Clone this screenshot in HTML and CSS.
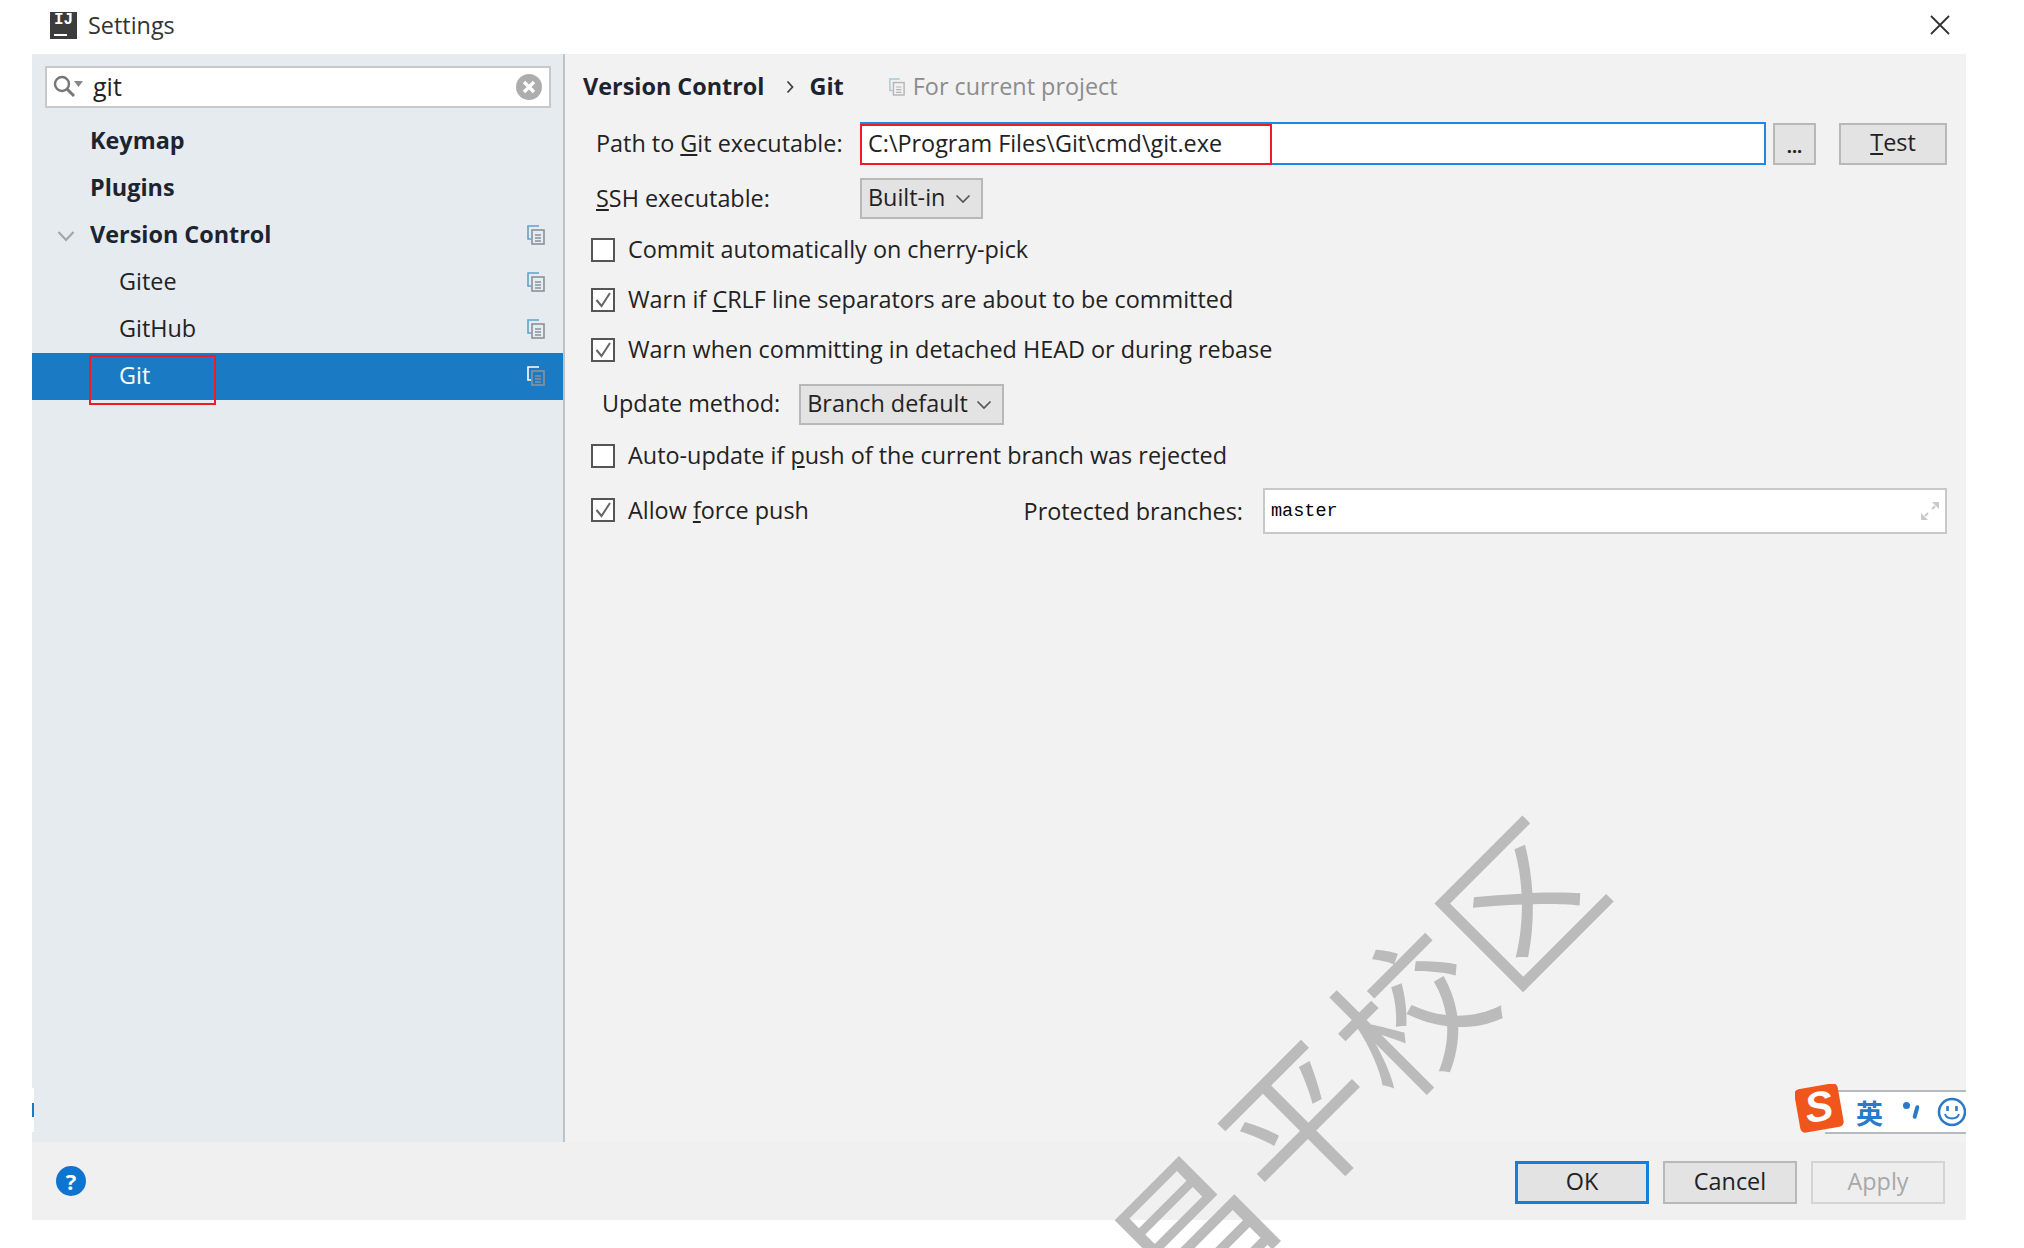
FILE: index.html
```html
<!DOCTYPE html>
<html lang="en">
<head>
  <meta charset="UTF-8">
  <meta name="viewport" content="width=device-width, initial-scale=1.0">
  <title>Settings</title>
  <link rel="stylesheet" href="styles.css">
</head>
<body>

  <svg class="icon-defs" width="0" height="0">
    <symbol id="copy" viewBox="0 0 18 20">
      <path d="M12 1H1v13h3" fill="none" stroke="currentColor" stroke-width="1.6"/>
      <rect x="5" y="5" width="12" height="14" fill="none" stroke="var(--copy-front)" stroke-width="1.6"/>
      <path d="M8 10h6M8 13h6M8 16h6" stroke="var(--copy-front)" stroke-width="1.4"/>
    </symbol>
  </svg>

  <div class="titlebar">
    <div class="app-logo"><span>IJ</span><i></i></div>
    <div class="title-text">Settings</div>
    <svg class="close-icon" width="22" height="22" viewBox="0 0 22 22">
      <path d="M2 2l18 18M20 2L2 20" stroke="#333" stroke-width="1.8" fill="none"/>
    </svg>
  </div>

  <div class="dialog">
    <div class="main">
      <div class="sidebar">
        <div class="search-box">
          <svg class="search-icon" width="32" height="24" viewBox="0 0 32 24">
            <circle cx="9" cy="9" r="7" fill="none" stroke="#777" stroke-width="2.4"/>
            <path d="M14 14l7 7" stroke="#777" stroke-width="3"/>
            <path d="M21 6h9l-4.500 6z" fill="#888"/>
          </svg>
          <span class="search-text">git</span>
          <svg class="clear-icon" width="26" height="26" viewBox="0 0 26 26">
            <circle cx="13" cy="13" r="13" fill="#adadad"/>
            <path d="M8 8l10 10M18 8L8 18" stroke="#fff" stroke-width="3.400"/>
          </svg>
        </div>

        <div class="tree">
          <div class="tree-row"><span class="tree-label bold">Keymap</span></div>
          <div class="tree-row"><span class="tree-label bold">Plugins</span></div>
          <div class="tree-row">
            <svg class="tree-arrow" width="18" height="12" viewBox="0 0 18 12"><path d="M1.500 2l7.500 8 7.500-8" fill="none" stroke="#a2a6aa" stroke-width="2.200"/></svg>
            <span class="tree-label bold">Version Control</span>
            <svg class="copy-icon"><use href="#copy"/></svg>
          </div>
          <div class="tree-row sub">
            <span class="tree-label">Gitee</span>
            <svg class="copy-icon"><use href="#copy"/></svg>
          </div>
          <div class="tree-row sub">
            <span class="tree-label">GitHub</span>
            <svg class="copy-icon"><use href="#copy"/></svg>
          </div>
          <div class="tree-row sub selected">
            <span class="tree-label">Git</span>
            <svg class="copy-icon"><use href="#copy"/></svg>
            <div class="red-box git-mark"></div>
          </div>
        </div>
      </div>

      <div class="panel">
        <div class="breadcrumb">
          <span class="crumb">Version Control</span>
          <svg class="crumb-arrow" width="8" height="14" viewBox="0 0 8 14"><path d="M1.500 1.500L6.500 7l-5 5.500" fill="none" stroke="#444" stroke-width="1.800"/></svg>
          <span class="crumb">Git</span>
          <svg class="project-icon"><use href="#copy"/></svg>
          <span class="project-text">For current project</span>
        </div>

        <div class="path-row">
          <label class="path-label">Path to <u>G</u>it executable:</label>
          <div class="path-input">
            <span>C:\Program Files\Git\cmd\git.exe</span>
            <div class="red-box path-mark"></div>
          </div>
          <div class="btn dots-btn">...</div>
          <div class="btn test-btn"><u>T</u>est</div>
        </div>

        <div class="ssh-row">
          <label class="path-label"><u>S</u>SH executable:</label>
          <div class="select ssh-select">Built-in
            <svg width="16" height="10" viewBox="0 0 16 10"><path d="M1.500 1.500L8 8l6.500-6.500" fill="none" stroke="#555" stroke-width="1.700"/></svg>
          </div>
        </div>

        <div class="check-row first">
          <span class="check"></span>
          <span>Commit automatically on cherry-pick</span>
        </div>
        <div class="check-row">
          <span class="check"><svg width="20" height="20" viewBox="0 0 20 20"><path d="M3.500 10l5 6L17 3" fill="none" stroke="#666" stroke-width="2"/></svg></span>
          <span>Warn if <u>C</u>RLF line separators are about to be committed</span>
        </div>
        <div class="check-row">
          <span class="check"><svg width="20" height="20" viewBox="0 0 20 20"><path d="M3.500 10l5 6L17 3" fill="none" stroke="#666" stroke-width="2"/></svg></span>
          <span>Warn when committing in detached HEAD or during rebase</span>
        </div>

        <div class="update-row">
          <label>Update method:</label>
          <div class="select update-select">Branch default
            <svg width="16" height="10" viewBox="0 0 16 10"><path d="M1.500 1.500L8 8l6.500-6.500" fill="none" stroke="#555" stroke-width="1.700"/></svg>
          </div>
        </div>

        <div class="check-row auto">
          <span class="check"></span>
          <span>Auto-update if <u>p</u>ush of the current branch was rejected</span>
        </div>

        <div class="force-row">
          <span class="check force-check"><svg width="20" height="20" viewBox="0 0 20 20"><path d="M3.500 10l5 6L17 3" fill="none" stroke="#666" stroke-width="2"/></svg></span>
          <span class="force-text">Allow <u>f</u>orce push</span>
          <label class="protected-label">Protected branches:</label>
          <div class="protected-input">
            <span>master</span>
            <svg width="20" height="20" viewBox="0 0 20 20">
              <path d="M12 1h7v7zM1 19v-7l7 7z" fill="#c4cace"/>
              <path d="M15 5l-3 3M5 15l3-3" stroke="#c4cace" stroke-width="2"/>
            </svg>
          </div>
        </div>
      </div>
    </div>

    <div class="footer">
      <div class="help-icon">?</div>
      <div class="footer-buttons">
        <div class="btn foot-btn ok">OK</div>
        <div class="btn foot-btn">Cancel</div>
        <div class="btn foot-btn disabled">Apply</div>
      </div>
    </div>
  </div>

  <!-- stuff lying over the dialog -->
  <div class="edge-sliver"></div>
  <div class="watermark">昌平校区</div>
  <div class="ime-bar">
    <div class="ime-logo"><span>S</span></div>
    <div class="ime-tray">
      <span class="ime-lang">英</span>
      <span class="ime-punct"><i></i><b></b></span>
      <svg width="30" height="30" viewBox="0 0 30 30">
        <circle cx="15" cy="15" r="13" fill="#fff" stroke="#2a7ac6" stroke-width="2.600"/>
        <path d="M10.500 9v5M19.500 9v5" stroke="#2a7ac6" stroke-width="2.600"/>
        <path d="M8 17c2 6 12 6 14 0" fill="none" stroke="#2a7ac6" stroke-width="2"/>
      </svg>
    </div>
  </div>

</body>
</html>
```

FILE: styles.css
```css
* {
  margin: 0;
  padding: 0;
  box-sizing: border-box;
}

html, body {
  height: 100%;
}

body {
  font-family: "Open Sans", "Noto Sans", Arial, sans-serif;
  font-size: 23.4px;
  color: #222;
  background-color: white;
  overflow: hidden;
  position: relative;
}

.icon-defs {
  position: absolute;
}

.titlebar {
  height: 54px;
  display: flex;
  align-items: center;
  padding-left: 50px;
  padding-right: 73px;
}

.app-logo {
  width: 27px;
  height: 27px;
  margin-top: -4px;
  background-color: #3c3c3c;
  color: white;
  font: bold 16px/17px "Liberation Mono", monospace;
  text-align: center;
  position: relative;
}

.app-logo i {
  position: absolute;
  left: 4px;
  bottom: 3px;
  width: 13px;
  height: 2px;
  background-color: white;
}

.title-text {
  margin-left: 11px;
  margin-top: -5px;
  flex: 1;
  color: #333;
}

.close-icon {
  margin-top: -4px;
}

.dialog {
  margin-left: 32px;
  width: 1934px;
  height: 1166px;
  display: flex;
  flex-direction: column;
}

.main {
  flex: 1;
  display: flex;
  min-height: 0;
}

/* left tree */
.sidebar {
  width: 534px;
  background-color: #e6ebf0;
  border-right: 2px solid #bfc3c6;
  padding-top: 12px;
}

.search-box {
  height: 42px;
  margin: 0 12px 0 13px;
  background-color: white;
  border: 2px solid #c8c8c8;
  display: flex;
  align-items: center;
  padding: 0 7px 0 6px;
}

.search-icon {
  flex: none;
}

.search-text {
  margin-left: 8px;
  flex: 1;
  font-size: 25px;
  padding-bottom: 3px;
}

.tree {
  margin-top: 10px;
}

.tree-row {
  height: 47px;
  display: flex;
  align-items: center;
  padding-left: 58px;
  padding-right: 18px;
  position: relative;
}

.tree-row.sub {
  padding-left: 87px;
}

.tree-row.selected {
  background-color: #1a7bc4;
  color: white;
  --copy-front: #fff;
}

.tree-row.selected .copy-icon {
  color: #fff;
}

.tree-label {
  flex: 1;
  padding-bottom: 4px;
}

.bold {
  font-weight: 700;
  color: #1c2430;
}

.tree-arrow {
  position: absolute;
  left: 25px;
  top: 18px;
}

.copy-icon {
  width: 18px;
  height: 20px;
  margin-top: -2px;
  color: #5ba3d0;
  --copy-front: #8c9299;
}

.red-box {
  position: absolute;
  border: 2px solid #ee1c25;
}

.git-mark {
  left: 57px;
  top: 2px;
  width: 127px;
  height: 50px;
}

/* right side */
.panel {
  flex: 1;
  background-color: #f2f2f2;
  padding: 13px 19px 0 18px;
}

.breadcrumb {
  height: 40px;
  display: flex;
  align-items: center;
}

.crumb, .project-text {
  padding-bottom: 3px;
}

.crumb {
  font-weight: 700;
  color: #1c2430;
}

.crumb-arrow {
  margin: 0 16px 0 21px;
}

.project-icon {
  width: 16px;
  height: 18px;
  margin-left: 45px;
  color: #a9c6d8;
  --copy-front: #b5b5b5;
}

.project-text {
  margin-left: 8px;
  color: #8c8c8c;
}

.path-row {
  margin-top: 15px;
  height: 43px;
  display: flex;
  align-items: center;
  padding-left: 13px;
}

.path-label {
  width: 264px;
  flex: none;
  padding-bottom: 2px;
}

.path-input {
  width: 906px;
  height: 43px;
  background-color: white;
  border: 2px solid #1e88e5;
  display: flex;
  align-items: center;
  padding-left: 6px;
  position: relative;
}

.path-input span {
  padding-bottom: 2px;
}

.path-mark {
  left: -2px;
  top: 0;
  width: 412px;
  height: 41px;
}

.btn {
  height: 42px;
  background-color: #e3e3e3;
  border: 2px solid #b8b8b8;
  display: flex;
  align-items: center;
  justify-content: center;
  padding-bottom: 3px;
}

.dots-btn {
  width: 43px;
  margin-left: 7px;
  font-weight: 700;
  font-size: 18px;
  padding: 4px 0 0;
}

.test-btn {
  width: 108px;
  margin-left: 23px;
}

.ssh-row {
  margin-top: 13px;
  display: flex;
  align-items: center;
  padding-left: 13px;
}

.select {
  height: 41px;
  background-color: #e3e3e3;
  border: 2px solid #b8b8b8;
  display: flex;
  align-items: center;
  justify-content: space-between;
  padding: 0 10px 3px 6px;
}

.select svg {
  margin-top: 3px;
}

.ssh-select {
  width: 123px;
}

.update-row label {
  padding-bottom: 3px;
}

.update-select {
  width: 205px;
  margin-left: 19px;
}

.check-row {
  height: 30px;
  margin-top: 20px;
  padding-left: 8px;
  display: flex;
  align-items: center;
  gap: 13px;
}

.check-row > span:last-child {
  padding-bottom: 3px;
}

.check-row.first {
  margin-top: 16px;
}

.check {
  width: 24px;
  height: 24px;
  flex: none;
  background-color: white;
  border: 2px solid #555;
  display: flex;
  align-items: center;
  justify-content: center;
}

.update-row {
  margin-top: 19px;
  padding-left: 19px;
  display: flex;
  align-items: center;
}

.check-row.auto {
  margin-top: 16px;
}

.force-row {
  margin-top: 17px;
  height: 46px;
  padding-left: 8px;
  display: flex;
  align-items: center;
}

.force-check {
  margin-top: -2px;
}

.force-text {
  margin-left: 13px;
  flex: 1;
  padding-bottom: 3px;
}

.protected-label {
  margin-right: 20px;
  padding-bottom: 1px;
}

.protected-input {
  width: 684px;
  height: 46px;
  background-color: white;
  border: 2px solid #c8c8c8;
  display: flex;
  align-items: center;
  justify-content: space-between;
  padding: 0 5px 0 6px;
  font: 18.5px "Liberation Mono", monospace;
  color: #000;
}

.footer {
  height: 78px;
  background-color: #f0f0f0;
  display: flex;
  align-items: center;
  justify-content: space-between;
  padding: 0 21px 0 24px;
}

.help-icon {
  width: 30px;
  height: 30px;
  border-radius: 50%;
  background-color: #0f74cf;
  color: white;
  font-size: 22px;
  font-weight: 700;
  line-height: 30px;
  text-align: center;
}

.footer-buttons {
  display: flex;
  gap: 14px;
  margin-top: 2px;
}

.foot-btn {
  width: 134px;
  height: 43px;
}

.foot-btn.ok {
  border: 3px solid #0f80dd;
}

.foot-btn.disabled {
  border-color: #d4d4d4;
  color: #a8a8a8;
  background-color: #eeeeee;
}

/* overlays */
.edge-sliver {
  position: absolute;
  left: 32px;
  top: 1088px;
  width: 2px;
  height: 44px;
  background: linear-gradient(white 15px, #1a7bc4 15px, #1a7bc4 29px, white 29px);
}

.watermark {
  position: absolute;
  left: 1352px;
  top: 1061px;
  transform: translate(-50%, -50%) rotate(-45deg);
  font-family: "Noto Sans CJK SC", sans-serif;
  font-size: 150px;
  line-height: 1;
  letter-spacing: 5px;
  white-space: nowrap;
  color: #bbbbbb;
}

.ime-bar {
  position: absolute;
  left: 1795px;
  top: 1084px;
  width: 171px;
  height: 50px;
  overflow: hidden;
}

.ime-logo {
  position: absolute;
  left: 2px;
  top: 2px;
  width: 44px;
  height: 44px;
  border-radius: 5px;
  background-color: #f0561c;
  color: white;
  font: italic bold 42px/42px "Liberation Sans", sans-serif;
  text-align: center;
  transform: rotate(-10deg);
  z-index: 1;
}

.ime-tray {
  position: absolute;
  left: 30px;
  top: 6px;
  width: 150px;
  height: 44px;
  background-color: white;
  border-top: 2px solid #b4bac0;
  border-bottom: 2px solid #b4bac0;
  display: flex;
  align-items: center;
  padding-left: 31px;
  color: #2a7ac6;
}

.ime-lang {
  font-family: "Noto Sans CJK SC", sans-serif;
  font-size: 27px;
  font-weight: 700;
  line-height: 1;
}

.ime-punct {
  width: 62px;
  position: relative;
  height: 30px;
}

.ime-punct i {
  position: absolute;
  left: 20px;
  top: 5px;
  width: 7px;
  height: 7px;
  border-radius: 50%;
  background-color: #2a7ac6;
}

.ime-punct b {
  position: absolute;
  left: 31px;
  top: 8px;
  width: 4px;
  height: 14px;
  border-radius: 2px;
  background-color: #2a7ac6;
  transform: rotate(15deg);
}

.ime-tray svg {
  flex: none;
  margin-left: -8px;
}
```
